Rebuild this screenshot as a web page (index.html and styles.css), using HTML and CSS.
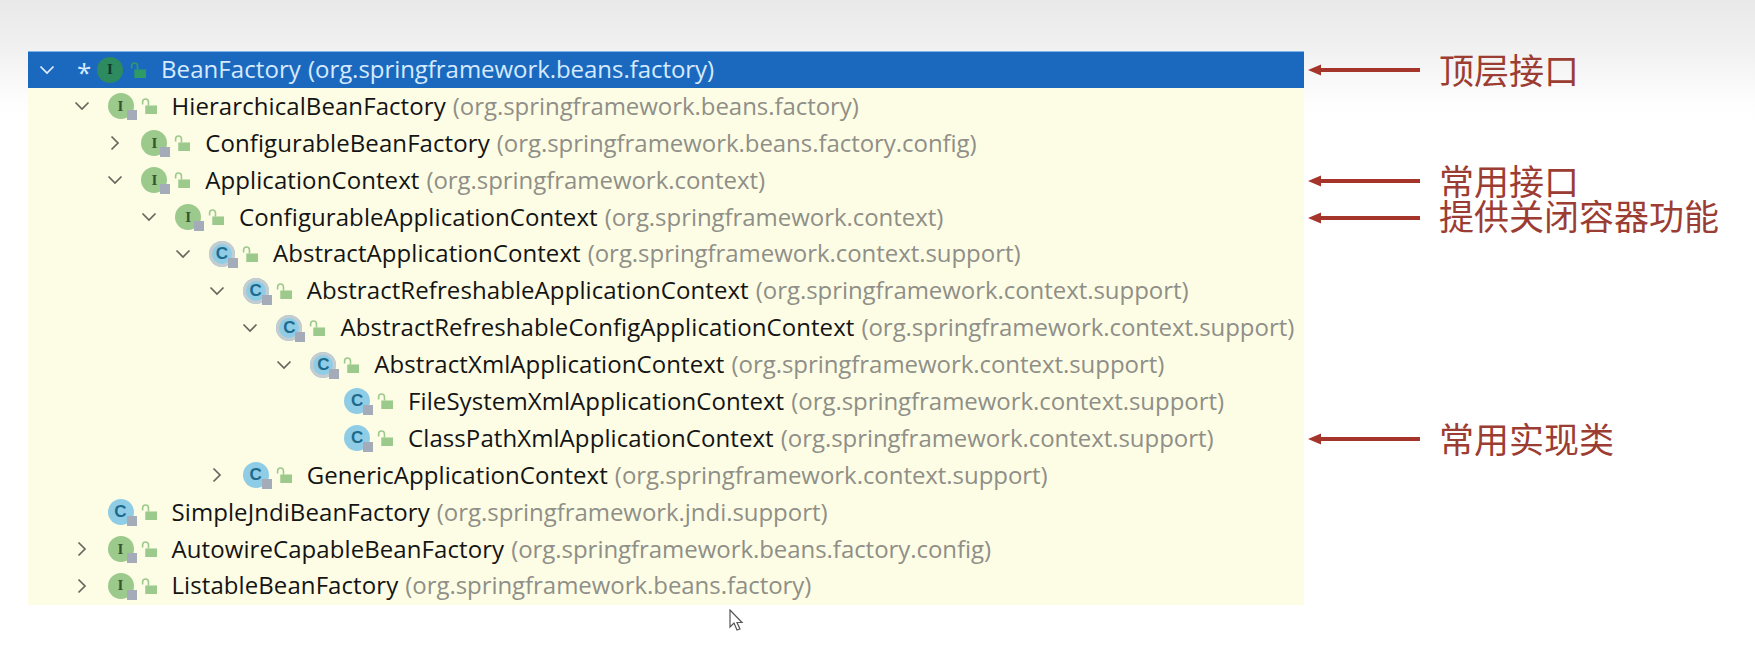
FILE: index.html
```html
<!DOCTYPE html>
<html lang="en">
<head>
  <meta charset="UTF-8" />
  <meta name="viewport" content="width=device-width, initial-scale=1.0" />
  <title>BeanFactory hierarchy</title>
  <link rel="stylesheet" href="styles.css">
</head>
<body>
  <svg class="defs" width="0" height="0">
    <symbol id="lock" viewBox="0 0 15 15">
      <path d="M1.5 6V3.8C1.5 2 2.8 1 4.2 1S7 2 7 3.8V7" fill="none" stroke="currentColor" stroke-width="1.5"/>
      <rect x="4" y="7" width="11" height="8" fill="currentColor"/>
    </symbol>
    <symbol id="down" viewBox="0 0 16 16"><path d="M1.5 4.5L8 11l6.500-6.500" fill="none" stroke="currentColor" stroke-width="1.700"/></symbol>
    <symbol id="right" viewBox="0 0 16 16"><path d="M4.500 1.500L11 8l-6.500 6.500" fill="none" stroke="currentColor" stroke-width="1.700"/></symbol>
    <symbol id="arrow" viewBox="0 0 112 14">
      <path d="M0 7L13 1.500V5H112V9H13V12.500Z" fill="currentColor"/>
    </symbol>
  </svg>

  <div class="page">
    <div class="tree">
      <div class="row root">
        <svg class="chev"><use href="#down"/></svg>
        <span class="star">*</span>
        <span class="icon i">I</span>
        <svg class="lock"><use href="#lock"/></svg>
        <span class="name">BeanFactory</span><span class="pkg">(org.springframework.beans.factory)</span>
      </div>
      <ul>
        <li>
          <div class="row"><svg class="chev"><use href="#down"/></svg><span class="icon i">I</span><svg class="lock"><use href="#lock"/></svg><span class="name">HierarchicalBeanFactory</span><span class="pkg">(org.springframework.beans.factory)</span></div>
          <ul>
            <li>
              <div class="row"><svg class="chev"><use href="#right"/></svg><span class="icon i">I</span><svg class="lock"><use href="#lock"/></svg><span class="name">ConfigurableBeanFactory</span><span class="pkg">(org.springframework.beans.factory.config)</span></div>
            </li>
            <li>
              <div class="row"><svg class="chev"><use href="#down"/></svg><span class="icon i">I</span><svg class="lock"><use href="#lock"/></svg><span class="name">ApplicationContext</span><span class="pkg">(org.springframework.context)</span></div>
              <ul>
                <li>
                  <div class="row"><svg class="chev"><use href="#down"/></svg><span class="icon i">I</span><svg class="lock"><use href="#lock"/></svg><span class="name">ConfigurableApplicationContext</span><span class="pkg">(org.springframework.context)</span></div>
                  <ul>
                    <li>
                      <div class="row"><svg class="chev"><use href="#down"/></svg><span class="icon c abstract">C</span><svg class="lock"><use href="#lock"/></svg><span class="name">AbstractApplicationContext</span><span class="pkg">(org.springframework.context.support)</span></div>
                      <ul>
                        <li>
                          <div class="row"><svg class="chev"><use href="#down"/></svg><span class="icon c abstract">C</span><svg class="lock"><use href="#lock"/></svg><span class="name">AbstractRefreshableApplicationContext</span><span class="pkg">(org.springframework.context.support)</span></div>
                          <ul>
                            <li>
                              <div class="row"><svg class="chev"><use href="#down"/></svg><span class="icon c abstract">C</span><svg class="lock"><use href="#lock"/></svg><span class="name">AbstractRefreshableConfigApplicationContext</span><span class="pkg">(org.springframework.context.support)</span></div>
                              <ul>
                                <li>
                                  <div class="row"><svg class="chev"><use href="#down"/></svg><span class="icon c abstract">C</span><svg class="lock"><use href="#lock"/></svg><span class="name">AbstractXmlApplicationContext</span><span class="pkg">(org.springframework.context.support)</span></div>
                                  <ul>
                                    <li><div class="row"><span class="chev"></span><span class="icon c">C</span><svg class="lock"><use href="#lock"/></svg><span class="name">FileSystemXmlApplicationContext</span><span class="pkg">(org.springframework.context.support)</span></div></li>
                                    <li><div class="row"><span class="chev"></span><span class="icon c">C</span><svg class="lock"><use href="#lock"/></svg><span class="name">ClassPathXmlApplicationContext</span><span class="pkg">(org.springframework.context.support)</span></div></li>
                                  </ul>
                                </li>
                              </ul>
                            </li>
                          </ul>
                        </li>
                        <li>
                          <div class="row"><svg class="chev"><use href="#right"/></svg><span class="icon c">C</span><svg class="lock"><use href="#lock"/></svg><span class="name">GenericApplicationContext</span><span class="pkg">(org.springframework.context.support)</span></div>
                        </li>
                      </ul>
                    </li>
                  </ul>
                </li>
              </ul>
            </li>
          </ul>
        </li>
        <li><div class="row"><span class="chev"></span><span class="icon c">C</span><svg class="lock"><use href="#lock"/></svg><span class="name">SimpleJndiBeanFactory</span><span class="pkg">(org.springframework.jndi.support)</span></div></li>
        <li><div class="row"><svg class="chev"><use href="#right"/></svg><span class="icon i">I</span><svg class="lock"><use href="#lock"/></svg><span class="name">AutowireCapableBeanFactory</span><span class="pkg">(org.springframework.beans.factory.config)</span></div></li>
        <li><div class="row"><svg class="chev"><use href="#right"/></svg><span class="icon i">I</span><svg class="lock"><use href="#lock"/></svg><span class="name">ListableBeanFactory</span><span class="pkg">(org.springframework.beans.factory)</span></div></li>
      </ul>
    </div>

    <!-- one slot per tree row, only some have a note -->
    <div class="notes">
      <div class="note"><svg class="arrow"><use href="#arrow"/></svg><span>顶层接口</span></div>
      <div class="note"></div>
      <div class="note"></div>
      <div class="note"><svg class="arrow"><use href="#arrow"/></svg><span>常用接口</span></div>
      <div class="note raised"><svg class="arrow"><use href="#arrow"/></svg><span>提供关闭容器功能</span></div>
      <div class="note"></div>
      <div class="note"></div>
      <div class="note"></div>
      <div class="note"></div>
      <div class="note"></div>
      <div class="note"><svg class="arrow"><use href="#arrow"/></svg><span>常用实现类</span></div>
    </div>
  </div>

  <svg class="cursor" viewBox="0 0 16 24">
    <path d="M1 1V18L5 14L8 21L11 20L8 13.500H13Z" fill="#fff" stroke="#555" stroke-width="1.200"/>
  </svg>
</body>
</html>
```

FILE: styles.css
```css
/* Base */
* { box-sizing: border-box; margin: 0; padding: 0; }
body {
  width: 1755px;
  height: 655px;
  overflow: hidden;
  position: relative;
  font-family: "Open Sans", "Noto Sans", sans-serif;
  background: linear-gradient(#e9e9e9 0, #f1f1f1 50px, #fdfdfd 100px, #fff 120px);
}
.defs { position: absolute; }

.page {
  display: flex;
  padding: 51px 0 0 28px;
}

/* Tree panel */
.tree {
  width: 1276px;
  height: 554px;
  overflow: hidden;
  background: #fdfde5;
  font-size: 24px;
  letter-spacing: 0.08px;
}
ul { list-style: none; }
.tree > ul { padding-left: 45.5px; }
.tree ul ul { padding-left: 33.8px; }

.row {
  display: flex;
  align-items: center;
  height: 36.9px;
  white-space: pre;
  color: #141414;
}
.name, .pkg { padding-bottom: 2px; }
.chev {
  width: 16px;
  height: 16px;
  flex: none;
  color: #66665e;
  margin-right: 18px;
}
.icon {
  position: relative;
  width: 26px;
  height: 26px;
  flex: none;
  border-radius: 50%;
  display: flex;
  align-items: center;
  justify-content: center;
  font: bold 15px "Liberation Serif", serif;
  letter-spacing: 0;
}
.icon::after {
  content: "";
  position: absolute;
  right: -3px;
  bottom: -1px;
  width: 10px;
  height: 10px;
  background: #a3acb8;
}
.icon.i { background: #9cc98c; color: #33562f; }
.icon.c { background: #8fcde6; color: #1e6a8c; font: bold 17px "Liberation Sans", sans-serif; }
.icon.abstract { background: #8fcde6; box-shadow: inset 0 0 0 3px #c4ccd0; }
.lock {
  width: 16px;
  height: 16px;
  flex: none;
  color: #9cc98c;
  margin: 0 15px 0 7px;
}
.pkg { color: #8f8f88; margin-left: 7px; letter-spacing: -0.05px; }

/* Selected root row */
.root {
  background: #1b69bf;
  border-top: 1px solid #7fb5e6;
  padding-left: 11px;
  color: #d5eaff;
}
.root .chev { color: #e4f0ff; margin-right: 22px; }
.root .star { width: 20px; font-size: 26px; line-height: 1; margin-top: 4px; color: #d5eaff; }
.root .icon { background: #2e8a5f; color: #103a2c; }
.root .icon::after { display: none; }
.root .lock { color: #2e9a66; }
.root .pkg { color: #d5eaff; }

/* Notes on the right */
.notes { font-family: "Noto Sans CJK SC", sans-serif; }
.note {
  display: flex;
  align-items: center;
  height: 36.9px;
  padding-left: 4px;
  color: #9c3d33;
  font-size: 35px;
  line-height: 36px;
  white-space: nowrap;
}
.note.raised span { padding-bottom: 4px; }
.arrow {
  width: 112px;
  height: 14px;
  color: #a5342a;
  margin: 2px 19px 0 0;
}

/* Mouse pointer over the screenshot */
.cursor {
  position: absolute;
  left: 729px;
  top: 609px;
  width: 16px;
  height: 24px;
}
```
